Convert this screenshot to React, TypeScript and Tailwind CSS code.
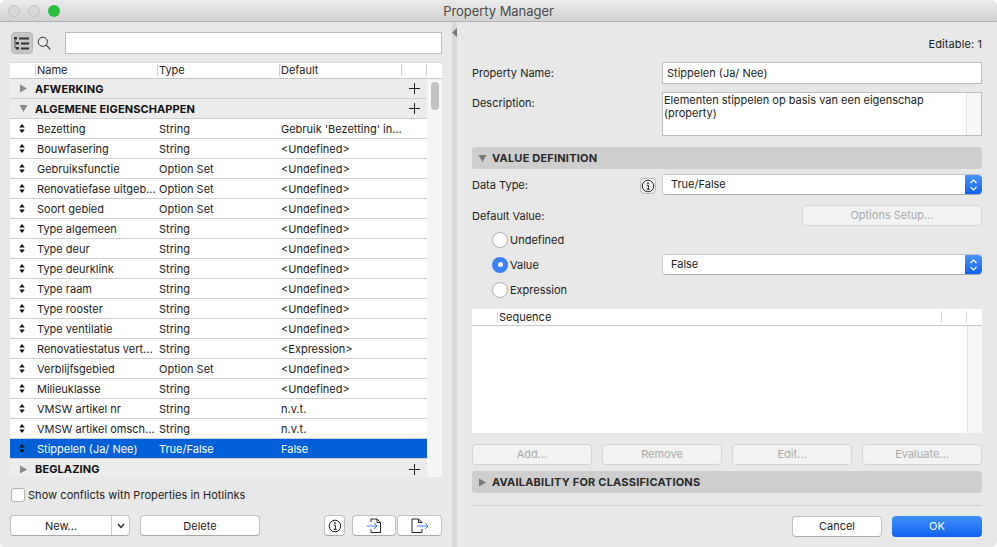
import React from "react";

const rows: [string, string, string][] = [
  ["Bezetting", "String", "Gebruik 'Bezetting' in..."],
  ["Bouwfasering", "String", "<Undefined>"],
  ["Gebruiksfunctie", "Option Set", "<Undefined>"],
  ["Renovatiefase uitgeb...", "Option Set", "<Undefined>"],
  ["Soort gebied", "Option Set", "<Undefined>"],
  ["Type algemeen", "String", "<Undefined>"],
  ["Type deur", "String", "<Undefined>"],
  ["Type deurklink", "String", "<Undefined>"],
  ["Type raam", "String", "<Undefined>"],
  ["Type rooster", "String", "<Undefined>"],
  ["Type ventilatie", "String", "<Undefined>"],
  ["Renovatiestatus vert...", "String", "<Expression>"],
  ["Verblijfsgebied", "Option Set", "<Undefined>"],
  ["Milieuklasse", "String", "<Undefined>"],
  ["VMSW artikel nr", "String", "n.v.t."],
  ["VMSW artikel omsch...", "String", "n.v.t."],
];

const Tri = ({ open, color = "#8a8a8a" }: { open?: boolean; color?: string }) => (
  <svg width="9" height="9" viewBox="0 0 9 9" className="shrink-0">
    <path d={open ? "M.5 1H8.5L4.5 8Z" : "M1 .5L8 4.5L1 8.5Z"} fill={color} />
  </svg>
);

const Plus = () => (
  <svg width="11" height="11" viewBox="0 0 11 11" className="shrink-0">
    <path d="M5.5 0V11M0 5.5H11" stroke="#222" strokeWidth="1" />
  </svg>
);

const UpDown = () => (
  <svg width="6" height="9" viewBox="0 0 6 9" className="shrink-0 block">
    <path d="M3 0L5.8 3.4H.2ZM3 9L.2 5.6H5.8Z" fill="#111" />
  </svg>
);

const Info = ({ size = 14 }: { size?: number }) => (
  <svg width={size} height={size} viewBox="0 0 14 14">
    <circle cx="7" cy="7" r="5.8" fill="none" stroke="#222" strokeWidth="1" />
    <path d="M5.7 6.2H7.4V10.2M5.6 10.3H8.8" fill="none" stroke="#222" strokeWidth="1" />
    <circle cx="7" cy="4.1" r=".9" fill="#222" />
  </svg>
);

const Stepper = () => (
  <div className="w-[17px] h-full flex items-center justify-center rounded-r-[4px] bg-gradient-to-b from-[#4b94f8] to-[#0f62f0] shrink-0">
    <svg width="9" height="14" viewBox="0 0 9 14">
      <path d="M1.5 5L4.5 2L7.5 5M1.5 9L4.5 12L7.5 9" fill="none" stroke="#fff" strokeWidth="1.2" />
    </svg>
  </div>
);

const Band = ({ open, label, className = "" }: { open?: boolean; label: string; className?: string }) => (
  <div className={`h-[22px] bg-[#cecece] rounded-[3px] flex items-center pl-[6px] gap-[5px] shrink-0 ${className}`}>
    <Tri open={open} color="#7b7b7b" />
    <span className="font-bold text-[#2a2a2a] tracking-[0.2px]">{label}</span>
  </div>
);

const Disabled = ({ label, className = "" }: { label: string; className?: string }) => (
  <div className={`h-[21px] rounded-[4px] bg-[#f2f2f2] border border-[#d4d4d4] text-[#aaaaaa] flex items-center justify-center pb-[1px] ${className}`}>
    {label}
  </div>
);

const Btn = ({ children, className = "" }: { children: React.ReactNode; className?: string }) => (
  <div className={`h-[21px] rounded-[4px] bg-white border border-[#c0c0c0] border-b-[#a8a8a8] text-[#222] flex items-center justify-center ${className}`}>
    {children}
  </div>
);

const Select = ({ value }: { value: string }) => (
  <div className="h-[21px] w-[320px] rounded-[4px] bg-white border-t border-b border-l border-t-[#c4c4c4] border-b-[#aaaaaa] border-l-[#d0d0d0] flex items-center justify-between pl-[8px] text-[#222]">
    <span className="pb-[1px]">{value}</span>
    <Stepper />
  </div>
);

const Radio = ({ checked, label }: { checked?: boolean; label: string }) => (
  <div className="h-[25px] flex items-center gap-[2px] pl-[20px]">
    {checked ? (
      <span className="w-[16px] h-[16px] rounded-full bg-[#3b82f6] flex items-center justify-center shrink-0">
        <span className="w-[5px] h-[5px] rounded-full bg-white" />
      </span>
    ) : (
      <span className="w-[16px] h-[16px] rounded-full bg-white border border-[#b4b4b4] shrink-0" />
    )}
    <span className="text-[#222]">{label}</span>
  </div>
);

export default function App() {
  return (
    <div
      className="w-[997px] h-[547px] bg-white overflow-hidden text-[11px] leading-[14px] text-[#222]"
      style={{ fontFamily: "Inter, 'Liberation Sans', sans-serif" }}
    >
      <div className="w-full h-full rounded-[6px] overflow-hidden bg-[#e8e8e8] flex flex-col">
        {/* Title bar */}
        <div className="h-[22px] shrink-0 bg-gradient-to-b from-[#ebebeb] to-[#d2d2d2] border-b border-[#b1b1b1] flex items-center">
          <div className="flex items-center gap-[8px] pl-[8px]">
            <span className="w-[12px] h-[12px] rounded-full bg-[#d8d8d8] border border-[#c4c4c4]" />
            <span className="w-[12px] h-[12px] rounded-full bg-[#d8d8d8] border border-[#c4c4c4]" />
            <span className="w-[12px] h-[12px] rounded-full bg-[#2ac140]" />
          </div>
          <div className="flex-1 text-center text-[13px] text-[#4a4a4a] pr-[60px] tracking-[-0.05px]">Property Manager</div>
        </div>

        <div className="flex-1 flex min-h-0">
          {/* Left panel */}
          <div className="w-[452px] shrink-0 flex flex-col pl-[10px] pr-[10px]">
            <div className="h-[22px] mt-[10px] flex items-center shrink-0">
              <div className="w-[22px] h-[22px] ml-[1px] rounded-[4px] bg-[#c6c6c6] border border-[#b8b8b8] flex items-center justify-center">
                <svg width="16" height="13" viewBox="0 0 16 13">
                  <path d="M0 0H3V2.5H0ZM5 .5H15V2.5H5ZM2 5H5V7.5H2ZM7 5.5H15V7.5H7ZM2 10H5V12.5H2ZM7 10.5H15V12.5H7Z" fill="#333" />
                  <path d="M1 2.5V11H2M1 6H2" fill="none" stroke="#333" strokeWidth=".8" />
                </svg>
              </div>
              <svg width="14" height="14" viewBox="0 0 14 14" className="ml-[4px]">
                <circle cx="5.8" cy="5.8" r="4.6" fill="none" stroke="#333" strokeWidth="1" />
                <path d="M9.2 9.2L13.3 13.3" stroke="#333" strokeWidth="1.1" />
              </svg>
              <div className="ml-[14px] flex-1 h-[22px] bg-white border border-[#bcbcbc]" />
            </div>

            {/* Table */}
            <div className="mt-[8px] flex flex-col shrink-0">
              <div className="h-[17px] bg-white border-t border-[#d8d8d8] border-b-[1px] border-b-[#c8c8c8] flex items-center text-[#222] pb-[2px]">
                <div className="w-[25px] h-[12px]" />
                <div className="w-[122px] h-[12px] border-l border-[#d0d0d0] pl-[1px] flex items-center">Name</div>
                <div className="w-[122px] h-[12px] border-l border-[#d0d0d0] pl-[1px] flex items-center">Type</div>
                <div className="w-[122px] h-[12px] border-l border-[#d0d0d0] pl-[1px] flex items-center">Default</div>
                <div className="w-[25px] h-[12px] border-l border-[#d0d0d0]" />
                <div className="flex-1 h-[12px] border-l border-[#d0d0d0]" />
              </div>
              <div className="flex h-[398px]">
                <div className="w-[417px] shrink-0 flex flex-col">
                  {[
                    ["AFWERKING", false],
                    ["ALGEMENE EIGENSCHAPPEN", true],
                  ].map(([l, o]) => (
                    <div key={l as string} className="h-[20px] bg-[#ececec] border-b border-[#d0d0d0] flex items-center pl-[9px] shrink-0">
                      <Tri open={o as boolean} />
                      <span className="ml-[7px] font-bold text-[#111] flex-1 tracking-[0.1px]">{l}</span>
                      <span className="mr-[7px]"><Plus /></span>
                    </div>
                  ))}
                  {rows.map(([n, t, d]) => (
                    <div key={n} className="h-[20px] bg-white border-b border-[#cfcfcf] flex items-center shrink-0">
                      <span className="w-[27px] pl-[9px] shrink-0"><UpDown /></span>
                      <span className="w-[122px] shrink-0 truncate">{n}</span>
                      <span className="w-[122px] shrink-0">{t}</span>
                      <span className="truncate">{d}</span>
                    </div>
                  ))}
                  <div className="h-[20px] bg-[#0060d8] border-b border-[#cfcfcf] flex items-center text-white shrink-0">
                    <span className="w-[27px] pl-[9px] shrink-0"><UpDown /></span>
                    <span className="w-[122px] shrink-0">Stippelen (Ja/ Nee)</span>
                    <span className="w-[122px] shrink-0">True/False</span>
                    <span>False</span>
                  </div>
                  <div className="flex-1 bg-[#ececec] flex items-center pl-[9px] pt-[2px]">
                    <Tri />
                    <span className="ml-[7px] font-bold text-[#111] flex-1 tracking-[0.1px]">BEGLAZING</span>
                    <span className="mr-[7px]"><Plus /></span>
                  </div>
                </div>
                <div className="flex-1 bg-[#f5f5f5] pt-[3px] pl-[4px]">
                  <div className="w-[8px] h-[28px] rounded-full bg-[#c2c2c2]" />
                </div>
              </div>
            </div>

            <label className="mt-[11px] flex items-center gap-[3px] ml-[1px] shrink-0 tracking-[0.05px]">
              <span className="w-[14px] h-[14px] rounded-[3px] bg-white border border-[#b4b4b4]" />
              Show conflicts with Properties in Hotlinks
            </label>

            <div className="mt-[13px] flex items-center shrink-0">
              <div className="w-[120px] h-[21px] rounded-[4px] bg-white border border-[#c0c0c0] border-b-[#a8a8a8] flex">
                <div className="w-[101px] flex items-center justify-center border-r border-[#d0d0d0]">New...</div>
                <div className="flex-1 flex items-center justify-center">
                  <svg width="8" height="6" viewBox="0 0 8 6"><path d="M1 1L4 4.5L7 1" fill="none" stroke="#222" strokeWidth="1.3" /></svg>
                </div>
              </div>
              <Btn className="w-[120px] ml-[10px]">Delete</Btn>
              <Btn className="w-[21px] ml-[64px]"><Info /></Btn>
              <Btn className="w-[44px] ml-[7px]">
                <svg width="16" height="15" viewBox="0 0 16 15">
                  <path d="M5 4V1H11L14.5 4.5V14.5H5V11.5" fill="none" stroke="#222" strokeWidth="1" />
                  <path d="M11 1V4.5H14.5" fill="none" stroke="#222" strokeWidth="1" />
                  <path d="M.5 8H11M8 5L11 8L8 11" fill="none" stroke="#3b82f6" strokeWidth="1" />
                </svg>
              </Btn>
              <Btn className="w-[45px] ml-[1px]">
                <svg width="18" height="15" viewBox="0 0 18 15">
                  <path d="M11 5V4.5L7.5 1H1V14.5H11V11" fill="none" stroke="#222" strokeWidth="1" />
                  <path d="M7.5 1V4.5H11" fill="none" stroke="#222" strokeWidth="1" />
                  <path d="M6 8H17M14 5L17 8L14 11" fill="none" stroke="#3b82f6" strokeWidth="1" />
                </svg>
              </Btn>
            </div>
          </div>

          {/* Divider */}
          <div className="w-[5px] shrink-0 bg-[#d8d8d8] relative">
            <svg width="5" height="9" viewBox="0 0 5 9" className="absolute top-[6px] left-0">
              <path d="M5 0V9L0 4.5Z" fill="#777" />
            </svg>
          </div>

          {/* Right panel */}
          <div className="flex-1 flex flex-col pl-[15px] pr-[15px] min-w-0">
            <div className="h-[14px] mt-[15px] text-right shrink-0 tracking-[0.1px]">Editable: 1</div>

            <div className="mt-[11px] flex items-center h-[22px] shrink-0">
              <span className="w-[190px] shrink-0">Property Name:</span>
              <div className="w-[320px] h-[22px] bg-white border border-[#bcbcbc] pl-[4px] flex items-center">Stippelen (Ja/ Nee)</div>
            </div>

            <div className="mt-[8px] flex items-start h-[44px] shrink-0">
              <span className="w-[190px] shrink-0 pt-[4px]">Description:</span>
              <div className="w-[320px] h-[44px] bg-white border border-[#bcbcbc] flex">
                <div className="flex-1 pl-[1px] pt-[1px] leading-[13px]">Elementen stippelen op basis van een eigenschap (property)</div>
                <div className="w-[15px] bg-[#f7f7f7] border-l border-[#e4e4e4] shrink-0" />
              </div>
            </div>

            <Band open label="VALUE DEFINITION" className="mt-[11px]" />

            <div className="mt-[5px] flex items-center h-[21px] shrink-0">
              <span className="w-[168px] shrink-0">Data Type:</span>
              <div className="w-[16px] h-[16px] mt-[2px] rounded-[4px] bg-[#f5f5f5] border border-[#bdbdbd] flex items-center justify-center shrink-0"><Info /></div>
              <div className="w-[6px] shrink-0" />
              <Select value="True/False" />
            </div>

            <div className="mt-[10px] flex items-center justify-between h-[21px] shrink-0">
              <span>Default Value:</span>
              <Disabled label="Options Setup..." className="w-[180px]" />
            </div>

            <div className="mt-[1px] flex flex-col shrink-0">
              <Radio label="Undefined" />
              <div className="flex items-center justify-between">
                <Radio checked label="Value" />
                <Select value="False" />
              </div>
              <Radio label="Expression" />
            </div>

            <div className="mt-[7px] h-[124px] bg-white flex flex-col shrink-0">
              <div className="h-[17px] shrink-0 border-b border-[#c8c8c8] flex items-center">
                <div className="w-[25px]" />
                <div className="w-[444px] h-[12px] border-l border-[#d8d8d8] pl-[1px] flex items-center">Sequence</div>
                <div className="w-[25px] h-[12px] border-l border-[#d8d8d8]" />
                <div className="h-[12px] border-l border-[#d8d8d8]" />
              </div>
              <div className="flex-1 flex justify-end">
                <div className="w-[15px] bg-[#f7f7f7] border-l border-[#e4e4e4]" />
              </div>
            </div>

            <div className="mt-[11px] flex justify-between shrink-0">
              <Disabled label="Add..." className="w-[120px]" />
              <Disabled label="Remove" className="w-[120px]" />
              <Disabled label="Edit..." className="w-[120px]" />
              <Disabled label="Evaluate..." className="w-[120px]" />
            </div>

            <Band label="AVAILABILITY FOR CLASSIFICATIONS" className="mt-[6px]" />

            <div className="mt-[12px] border-t border-[#cfcfcf] shrink-0" />

            <div className="mt-[10px] flex justify-end gap-[10px] shrink-0">
              <Btn className="w-[90px] pb-[1px]">Cancel</Btn>
              <div className="w-[90px] h-[21px] rounded-[4px] bg-gradient-to-b from-[#3f8ffa] to-[#0f62f0] text-white flex items-center justify-center pb-[1px]">OK</div>
            </div>
          </div>
        </div>
      </div>
    </div>
  );
}
